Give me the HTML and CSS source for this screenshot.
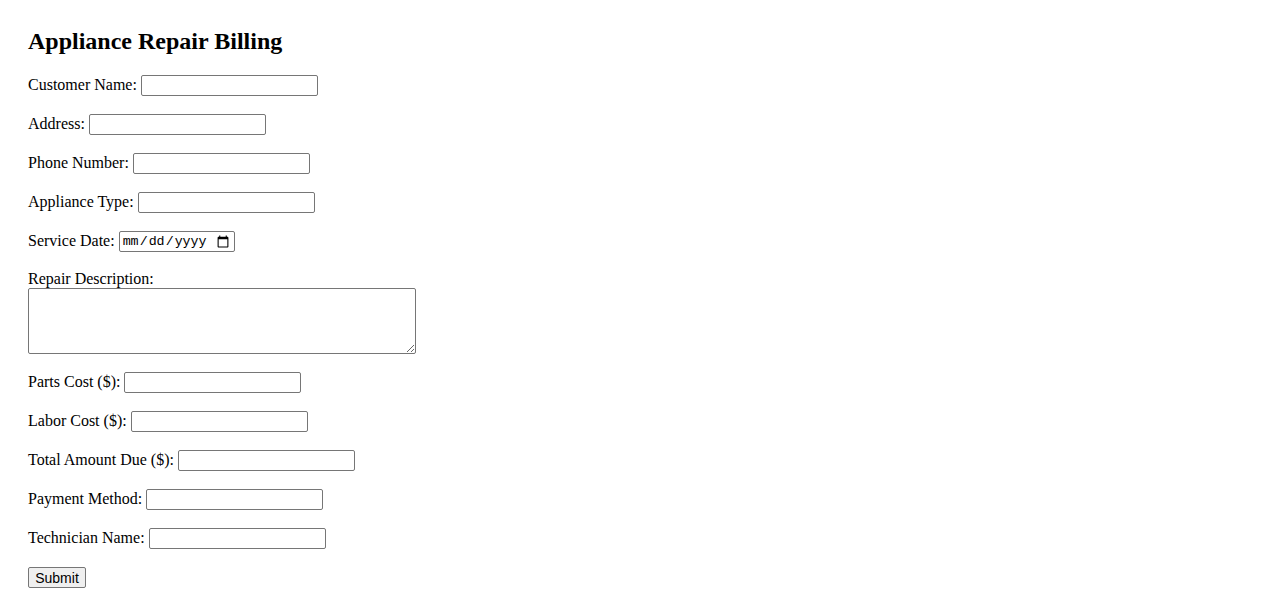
FILE: index.html
```html
<!DOCTYPE html>
<html lang="en">
<head>
<meta charset="utf-8">
<title>Appliance Repair Billing</title>
<link rel="stylesheet" href="styles.css">
</head>
<body>
<main class="page">
  <h2 class="title">Appliance Repair Billing</h2>
  <form class="form">
    <div class="row"><label for="cn">Customer Name:</label><input class="field" id="cn" type="text"></div>
    <div class="row"><label for="ad">Address:</label><input class="field" id="ad" type="text"></div>
    <div class="row"><label for="ph">Phone Number:</label><input class="field" id="ph" type="text"></div>
    <div class="row"><label for="at">Appliance Type:</label><input class="field" id="at" type="text"></div>
    <div class="row"><label for="sd">Service Date:</label><input class="date" id="sd" type="date"></div>
    <div class="block">
      <label class="block-label" for="rd">Repair Description:</label>
      <textarea class="area" id="rd"></textarea>
    </div>
    <div class="row"><label for="pc">Parts Cost ($):</label><input class="field" id="pc" type="text"></div>
    <div class="row"><label for="lc">Labor Cost ($):</label><input class="field" id="lc" type="text"></div>
    <div class="row"><label for="ta">Total Amount Due ($):</label><input class="field" id="ta" type="text"></div>
    <div class="row"><label for="pm">Payment Method:</label><input class="field" id="pm" type="text"></div>
    <div class="row"><label for="tn">Technician Name:</label><input class="field" id="tn" type="text"></div>
    <div class="row"><button class="submit" type="submit">Submit</button></div>
  </form>
</main>
</body>
</html>
```
FILE: styles.css
```css
html, body {
  margin: 0;
  background: #ffffff;
}
body {
  font-family: "Liberation Serif", "Times New Roman", serif;
  font-size: 16px;
  color: #000000;
}
.page {
  padding: 28px;
}
.title {
  margin: 0 0 21px 0;
  font-size: 24px;
  line-height: 26px;
  font-weight: bold;
}
.form {
  display: flex;
  flex-direction: column;
  gap: 18px;
}
.row {
  display: flex;
  align-items: center;
  gap: 4px;
  height: 21px;
  line-height: 18px;
}
.row label {
  padding-bottom: 2px;
}
.field, .date, .area, .submit {
  box-sizing: border-box;
  border: 1px solid #767676;
  border-radius: 2px;
  background: #ffffff;
  margin: 0;
}
.field {
  width: 177px;
  height: 21px;
  padding: 1px 2px;
  font-family: "Liberation Sans", Arial, sans-serif;
  font-size: 13.33px;
}
.date {
  width: 116px;
  height: 21px;
  padding: 1px 2px;
  font-family: "Liberation Mono", "DejaVu Sans Mono", monospace;
  font-size: 13.33px;
}
.block {
  display: flex;
  flex-direction: column;
  align-items: flex-start;
}
.block-label {
  line-height: 18px;
}
.area {
  width: 388px;
  height: 66px;
  padding: 2px;
  font-family: "Liberation Mono", monospace;
  font-size: 13.33px;
}
.submit {
  width: 58px;
  height: 21px;
  padding: 1px 6px;
  background: #efefef;
  font-family: "Liberation Sans", Arial, sans-serif;
  font-size: 14px;
  color: #000000;
}
```
